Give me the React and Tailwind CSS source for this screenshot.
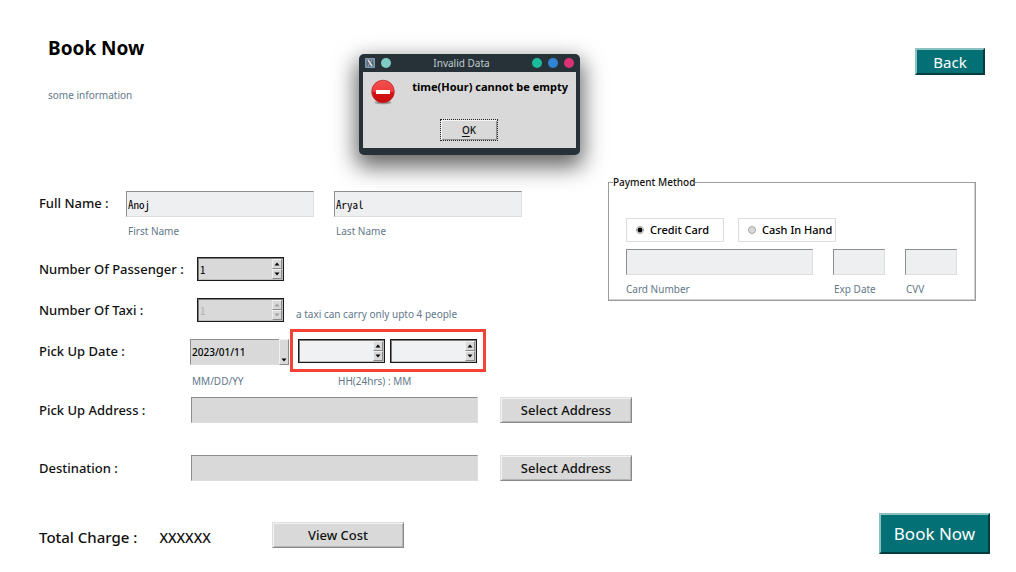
import React from "react";

const sunken =
  "block border border-t-[#8e8e8e] border-l-[#8e8e8e] border-r-[#dedede] border-b-[#dedede] outline-none";
const mono =
  "font-['Noto_Sans_Mono_CJK_SC','Liberation_Mono',monospace] text-[11px] font-normal text-black";
const hint = "block text-[10px] leading-4 text-[#62788a]";
const rowLabel = "shrink-0 text-[13px] leading-5 font-medium text-[#111]";
const raised =
  "border border-t-[#dedede] border-l-[#dedede] border-r-[#8a8a8a] border-b-[#8a8a8a] bg-[#d9d9d9] shadow-[inset_1px_1px_0_#f2f2f2,inset_-1px_-1px_0_#b4b4b4]";
const teal =
  "border-2 border-t-[#8cc0c1] border-l-[#8cc0c1] border-r-[#073c3f] border-b-[#073c3f] bg-[#027074] text-white";

function Arrow({ down = false }) {
  return (
    <svg viewBox="0 0 6 4" className="h-1 w-1.5" fill="currentColor" aria-hidden="true">
      <path d={down ? "M0.5 0.5h5L3 3.5z" : "M0.5 3.5h5L3 0.5z"} />
    </svg>
  );
}

function Spinbox({ id, value = "", label, fill = "bg-[#d9d9d9]", disabled = false }) {
  const step =
    "flex flex-1 items-center justify-center border border-t-[#efefef] border-l-[#efefef] border-r-[#8a8a8a] border-b-[#8a8a8a] bg-[#d9d9d9] text-black disabled:text-[#a0a0a0]";
  return (
    <div
      className={`flex h-6 w-[87px] shrink-0 border border-[#1a1a1a] p-px shadow-[inset_1px_1px_0_#7c7c7c,inset_-1px_-1px_0_#bdbdbd] ${fill}`}
    >
      <input
        id={id}
        aria-label={label}
        defaultValue={value}
        disabled={disabled}
        className={`w-0 min-w-0 flex-1 bg-transparent pl-px outline-none disabled:text-[#b0b0b0] ${mono}`}
      />
      <div className="flex w-2.5 flex-col">
        <button type="button" aria-label="Increase" disabled={disabled} className={step}>
          <Arrow />
        </button>
        <button type="button" aria-label="Decrease" disabled={disabled} className={step}>
          <Arrow down />
        </button>
      </div>
    </div>
  );
}

function PaymentOption({ label, checked = false }) {
  return (
    <label className="flex h-6 w-[98px] items-center gap-1.5 border border-[#dcdcdc] pl-[9px] text-[11px] font-medium whitespace-nowrap text-black">
      <input
        type="radio"
        name="payment"
        defaultChecked={checked}
        className="size-2 shrink-0 appearance-none rounded-full border border-[#a5a5a5] bg-[#d9d9d9] checked:bg-[radial-gradient(circle,#000_0_2px,#fff_3px)]"
      />
      {label}
    </label>
  );
}

function CardField({ id, label, width, indent = "" }) {
  return (
    <div className={width}>
      <input id={id} className={`${sunken} h-[26px] w-full bg-[#edeff1] ${mono}`} />
      <label htmlFor={id} className={`${hint} mt-1.5 whitespace-nowrap ${indent}`}>
        {label}
      </label>
    </div>
  );
}

function NameField({ id, label, value }) {
  return (
    <div className="w-[188px]">
      <input
        id={id}
        defaultValue={value}
        className={`${sunken} h-[26px] w-full bg-[#edeff1] pl-px ${mono}`}
      />
      <label htmlFor={id} className={`${hint} mt-1.5 pl-0.5`}>
        {label}
      </label>
    </div>
  );
}

function AddressRow({ id, label }) {
  return (
    <div className="flex h-[26px] items-center">
      <label htmlFor={id} className={`${rowLabel} w-[152px]`}>
        {label}
      </label>
      <input id={id} className={`${sunken} h-[26px] w-[287px] bg-[#d9d9d9] ${mono}`} />
      <button
        type="button"
        className={`${raised} ml-[22px] h-[26px] w-[132px] text-[13px] leading-5 font-medium`}
      >
        Select Address
      </button>
    </div>
  );
}

function ErrorDialog() {
  return (
    <div
      role="alertdialog"
      aria-labelledby="dialog-title"
      aria-describedby="dialog-message"
      className="absolute top-[54px] left-[359px] flex w-[221px] flex-col rounded-[5px] bg-[#263238] px-1 pb-[7px] shadow-[0_9px_22px_3px_rgba(0,0,0,0.6)]"
    >
      <div className="flex h-[18px] items-center px-0.5">
        <div className="flex w-8 items-center gap-1.5">
          <svg viewBox="0 0 10 10" className="size-2.5" aria-hidden="true">
            <rect width="10" height="10" rx="1" fill="#7f9bb3" />
            <rect x="1.5" y="1.5" width="7" height="7" fill="#596874" />
            <path d="M3 2l4 6" stroke="#e4e0dc" strokeWidth="1.4" />
            <path d="M7 2L3 8" stroke="#b9c3ca" strokeWidth="0.8" />
          </svg>
          <span className="size-2.5 rounded-full bg-[#80cbc4]" />
        </div>
        <h2
          id="dialog-title"
          className="flex-1 text-center text-[10px] leading-4 text-[#c3cbcf]"
        >
          Invalid Data
        </h2>
        <div className="flex w-12 items-center justify-end gap-1.5">
          <button type="button" aria-label="Minimize" className="size-2.5 rounded-full bg-[#1abc9c]" />
          <button type="button" aria-label="Maximize" className="size-2.5 rounded-full bg-[#2f84d6]" />
          <button type="button" aria-label="Close" className="size-2.5 rounded-full bg-[#dc3275]" />
        </div>
      </div>
      <div className="flex h-[76px] flex-col bg-[#d9d9d9] px-2 pt-[7px]">
        <div className="flex h-10 justify-between">
          <svg viewBox="0 0 24 26" className="h-[26px] w-6" aria-hidden="true">
            <defs>
              <linearGradient id="stop" x1="0" y1="0" x2="0" y2="1">
                <stop offset="0" stopColor="#f25050" />
                <stop offset="0.5" stopColor="#ee3d3d" />
                <stop offset="0.55" stopColor="#d51515" />
                <stop offset="1" stopColor="#c80c0c" />
              </linearGradient>
            </defs>
            <ellipse cx="12" cy="23.5" rx="8.5" ry="1.8" fill="#9b9b9b" />
            <circle cx="12" cy="12.5" r="11.3" fill="url(#stop)" stroke="#b92020" strokeWidth="0.7" />
            <rect x="5" y="11" width="14" height="4" fill="#fff" />
          </svg>
          <p
            id="dialog-message"
            className="text-[11px] leading-4 font-bold whitespace-nowrap text-black"
          >
            time(Hour) cannot be empty
          </p>
        </div>
        <button
          type="button"
          className="ml-[69px] h-[22px] w-[58px] border border-dotted border-[#222] bg-[#d9d9d9] text-[10px] leading-4 font-medium shadow-[inset_1px_1px_0_#f5f5f5,inset_-1px_-1px_0_#8f8f8f]"
        >
          <span className="underline underline-offset-2">O</span>K
        </button>
      </div>
    </div>
  );
}

export default function App() {
  return (
    <div className="relative min-h-screen bg-white font-['Noto_Sans',sans-serif] text-[#111]">
      <header className="flex h-[174px] items-start justify-between pr-[31px] pl-12">
        <div className="pt-8">
          <h1 className="text-[19px] leading-8 font-bold text-black">Book Now</h1>
          <p className={`${hint} mt-[23px]`}>some information</p>
        </div>
        <button type="button" className={`${teal} mt-12 h-[27px] w-[70px] text-[15px] leading-5`}>
          Back
        </button>
      </header>

      <ErrorDialog />

      <form>
        <div className="flex justify-between pr-10 pl-[39px]">
          <div className="pt-[17px]">
            <div className="flex items-start">
              <span className={`${rowLabel} mt-0.5 w-[87px]`}>Full Name :</span>
              <div className="flex gap-5">
                <NameField id="first" label="First Name" value="Anoj" />
                <NameField id="last" label="Last Name" value="Aryal" />
              </div>
            </div>
            <div className="mt-[18px] flex items-center">
              <label htmlFor="passengers" className={`${rowLabel} w-[158px]`}>
                Number Of Passenger :
              </label>
              <Spinbox id="passengers" value="1" />
            </div>
            <div className="mt-[17px] flex items-center">
              <label htmlFor="taxis" className={`${rowLabel} w-[158px]`}>
                Number Of Taxi :
              </label>
              <Spinbox id="taxis" value="1" disabled />
              <p className={`${hint} mt-2 ml-3`}>a taxi can carry only upto 4 people</p>
            </div>
          </div>

          <fieldset className="h-[127px] w-[368px] shrink-0 border border-[#9d9d9d] pl-[17px] shadow-[inset_-1px_-1px_0_#d0d0d0]">
            <legend className="-ml-[13px] text-[10px] leading-4 font-medium text-[#111]">
              Payment Method
            </legend>
            <div className="mt-7 flex gap-3.5">
              <PaymentOption label="Credit Card" checked />
              <PaymentOption label="Cash In Hand" />
            </div>
            <div className="mt-[7px] flex">
              <CardField id="card" label="Card Number" width="w-[187px] mr-5" />
              <CardField id="exp" label="Exp Date" width="w-[52px] mr-5" indent="pl-px" />
              <CardField id="cvv" label="CVV" width="w-[52px]" indent="pl-px" />
            </div>
          </fieldset>
        </div>

        <div className="mt-[7px] pl-[39px]">
          <div className="flex items-start">
            <label htmlFor="date" className={`${rowLabel} mt-3 w-[151px]`}>
              Pick Up Date :
            </label>
            <div className="mt-2.5 w-[100px]">
              <div className="relative w-[99px]">
                <select
                  id="date"
                  className={`${sunken} h-[26px] w-full appearance-none bg-[#d9d9d9] pl-px text-[10px] font-medium text-black`}
                >
                  <option>2023/01/11</option>
                </select>
                <span className="pointer-events-none absolute inset-y-0 right-0 flex w-2.5 items-end justify-center border border-t-[#efefef] border-l-[#efefef] border-r-[#8a8a8a] border-b-[#8a8a8a] bg-[#d9d9d9] pb-0.5 text-black">
                  <Arrow down />
                </span>
              </div>
              <span className={`${hint} mt-2 pl-0.5`}>MM/DD/YY</span>
            </div>
            <div>
              <div className="flex h-[43px] gap-[5px] border-[3px] border-[#f44336] pt-[7px] pr-1.5 pl-[5px]">
                <Spinbox label="Hour" fill="bg-[#f0f1f3]" />
                <Spinbox label="Minute" fill="bg-[#f0f1f3]" />
              </div>
              <span className={`${hint} mt-px pl-12`}>HH(24hrs) : MM</span>
            </div>
          </div>

          <div className="mt-2 flex flex-col gap-8">
            <AddressRow id="pickup" label="Pick Up Address :" />
            <AddressRow id="destination" label="Destination :" />
          </div>
        </div>

        <div className="mt-8 flex items-start pr-[26px] pl-[39px]">
          <div className="mt-3 flex w-[233px] items-baseline gap-[22px] leading-6 font-medium">
            <span className="text-[15px]">Total Charge :</span>
            <output className="text-[14px]">XXXXXX</output>
          </div>
          <button
            type="button"
            className={`${raised} mt-[9px] h-[26px] w-[132px] text-[13px] leading-5 font-medium`}
          >
            View Cost
          </button>
          <button type="submit" className={`${teal} ml-auto h-[41px] w-[111px] text-[17px] leading-6`}>
            Book Now
          </button>
        </div>
      </form>
    </div>
  );
}
